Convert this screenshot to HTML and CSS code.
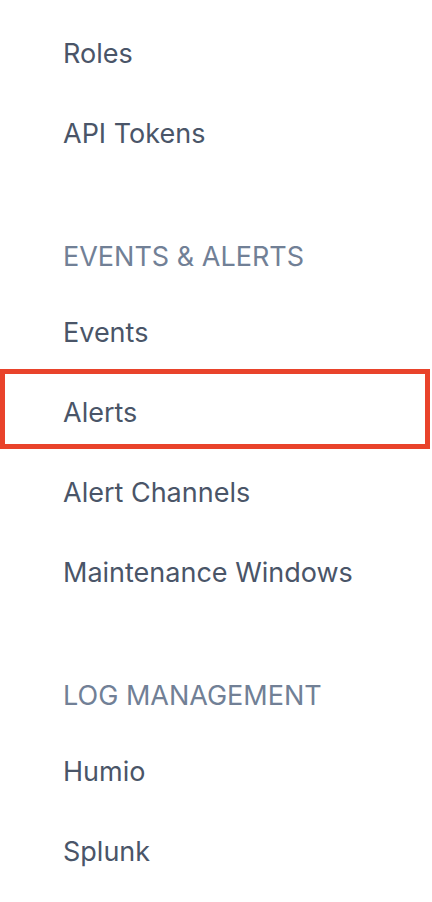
FILE: index.html
```html
<!DOCTYPE html>
<html lang="en">
<head>
<meta charset="utf-8">
<title>Settings nav</title>
<link rel="stylesheet" href="styles.css">
</head>
<body>
<nav class="sidenav">
  <ul class="list">
    <li class="item">Roles</li>
    <li class="item">API Tokens</li>
  </ul>
  <h3 class="group-title">EVENTS &amp; ALERTS</h3>
  <ul class="list">
    <li class="item">Events</li>
    <li class="item highlight">Alerts</li>
    <li class="item">Alert Channels</li>
    <li class="item">Maintenance Windows</li>
  </ul>
  <h3 class="group-title">LOG MANAGEMENT</h3>
  <ul class="list">
    <li class="item">Humio</li>
    <li class="item">Splunk</li>
  </ul>
</nav>
</body>
</html>
```
FILE: styles.css
```css
html, body {
  margin: 0;
  padding: 0;
  background: #ffffff;
}
body {
  font-family: Inter, "Noto Sans", "Liberation Sans", sans-serif;
}
.sidenav {
  width: 430px;
  padding-top: 10px;
}
.list {
  list-style: none;
  margin: 0;
  padding: 0;
}
.item {
  box-sizing: border-box;
  height: 80px;
  padding: 8px 0 0 63px;
  line-height: 72px;
  font-size: 27px;
  color: #4a5568;
}
.item.highlight {
  box-shadow: inset 0 0 0 5px #e9432b;
}
.group-title {
  margin: 67px 0 12px;
  height: 40px;
  line-height: 40px;
  padding-left: 63px;
  font-size: 27px;
  font-weight: 400;
  color: #718096;
}
```
